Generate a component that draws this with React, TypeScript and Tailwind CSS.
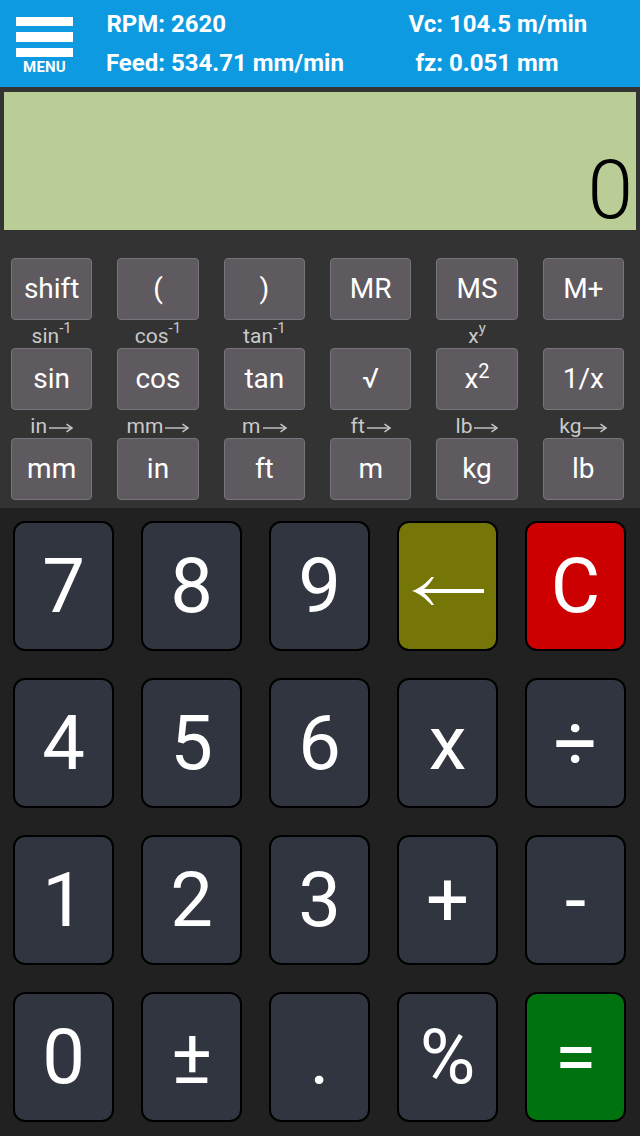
import React from "react";

const font = { fontFamily: "Roboto, 'Liberation Sans', sans-serif" };

function SmallArrow() {
  return (
    <svg width="24" height="10" viewBox="0 0 24 10" className="ml-[2px] mt-[3px]">
      <path d="M0 5 L22.5 5" stroke="#c9c9c9" strokeWidth="1.4" fill="none" />
      <path d="M17.5 1.2 L23 5 L17.5 8.8" stroke="#c9c9c9" strokeWidth="1.4" fill="none" />
    </svg>
  );
}

const sup = "text-[15px] top-[-0.55em]";

const row1: React.ReactNode[] = ["shift", "(", ")", "MR", "MS", "M+"];
const sub1: React.ReactNode[] = [
  <>sin<sup className={sup}>-1</sup></>,
  <>cos<sup className={sup}>-1</sup></>,
  <>tan<sup className={sup}>-1</sup></>,
  "",
  <>x<sup className={sup}>y</sup></>,
  "",
];
const row2: React.ReactNode[] = [
  "sin",
  "cos",
  "tan",
  "√",
  <>x<sup className="text-[20px] top-[-0.5em]">2</sup></>,
  "1/x",
];
const sub2: React.ReactNode[] = ["in", "mm", "m", "ft", "lb", "kg"].map((t) => (
  <span className="flex items-center">
    {t}
    <SmallArrow />
  </span>
));
const row3: React.ReactNode[] = ["mm", "in", "ft", "m", "kg", "lb"];

function TopRow({ items }: { items: React.ReactNode[] }) {
  return (
    <div className="grid grid-cols-6 gap-x-[25px] pl-[11px] pr-[16px]">
      {items.map((it, i) => (
        <div
          key={i}
          className="h-[62px] rounded-[4px] bg-[#5f5a60] border border-[#78747b] flex items-center justify-center text-white text-[28px] leading-none"
        >
          <span>{it}</span>
        </div>
      ))}
    </div>
  );
}

function SubRow({ items }: { items: React.ReactNode[] }) {
  return (
    <div className="grid grid-cols-6 gap-x-[25px] pl-[11px] pr-[16px] h-[28px]">
      {items.map((it, i) => (
        <div
          key={i}
          className="flex items-center justify-center text-[#c9c9c9] text-[21px] leading-none pt-[4px]"
        >
          <span className="flex items-center">{it}</span>
        </div>
      ))}
    </div>
  );
}

function Arrow() {
  return (
    <svg width="72" height="28" viewBox="0 0 72 28" className="mt-[9px]">
      <path
        d="M0 14 C8 11.5 14 6 19.5 0 L22 0 C19 5 16 9 12 12 L72 12 L72 16 L12 16 C16 19 19 23 22 28 L19.5 28 C14 22 8 16.5 0 14 Z"
        fill="#ffffff"
      />
    </svg>
  );
}

type Key = { label: React.ReactNode; bg?: string };

const keys: Key[] = [
  { label: "7" },
  { label: "8" },
  { label: "9" },
  { label: <Arrow />, bg: "olive" },
  { label: "C", bg: "red" },
  { label: "4" },
  { label: "5" },
  { label: "6" },
  { label: "x" },
  { label: "÷" },
  { label: "1" },
  { label: "2" },
  { label: "3" },
  { label: "+" },
  { label: "-" },
  { label: "0" },
  { label: "±" },
  { label: "." },
  { label: "%" },
  { label: "=", bg: "green" },
];

export default function App() {
  return (
    <div className="w-[640px] h-[1136px] flex flex-col bg-[#212121] overflow-hidden" style={font}>
      {/* Header */}
      <div className="h-[87px] bg-[#0e9ae0] flex items-start shrink-0">
        <div className="w-[104px] pl-[16px] pt-[17px] flex flex-col items-start">
          <div className="w-[57px] flex flex-col">
            <div className="h-[9px] bg-white" />
            <div className="h-[10px] bg-white mt-[6px]" />
            <div className="h-[9px] bg-white mt-[6px]" />
            <div className="text-white font-bold text-[15px] leading-none text-center mt-[3px] tracking-[0.2px]">
              MENU
            </div>
          </div>
        </div>
        <div className="grid grid-cols-[61px_240px_38px_auto] grid-rows-[39px_39px] pt-[4px] text-white font-bold text-[24px] leading-none">
          <div className="flex items-center justify-end">RPM:</div>
          <div className="pl-[6px] flex items-center">2620</div>
          <div className="flex items-center justify-end">Vc:</div>
          <div className="pl-[6px] flex items-center">104.5 m/min</div>
          <div className="flex items-center justify-end">Feed:</div>
          <div className="pl-[6px] flex items-center">534.71 mm/min</div>
          <div className="flex items-center justify-end">fz:</div>
          <div className="pl-[6px] flex items-center">0.051 mm</div>
        </div>
      </div>

      {/* Upper panel */}
      <div className="bg-[#333333] shrink-0 pt-[5px] pb-[8px]">
        <div className="mx-[4px] h-[138px] bg-[#bbcd97] flex items-end justify-end pr-[3px]">
          <span className="text-black text-[82px] leading-none font-light mb-[-1px]">0</span>
        </div>
        <div className="h-[28px]" />
        <TopRow items={row1} />
        <SubRow items={sub1} />
        <TopRow items={row2} />
        <SubRow items={sub2} />
        <TopRow items={row3} />
      </div>

      {/* Keypad */}
      <div className="flex-1 grid grid-cols-5 gap-x-[27px] gap-y-[27px] pl-[13px] pr-[14px] pt-[13px] content-start">
        {keys.map((k, i) => {
          const bg =
            k.bg === "olive"
              ? "bg-[#767508]"
              : k.bg === "red"
              ? "bg-[#cc0000]"
              : k.bg === "green"
              ? "bg-[#007210]"
              : "bg-[#313540]";
          return (
            <div
              key={i}
              className={`h-[130px] rounded-[12px] border-2 border-black flex items-center justify-center text-white text-[76px] leading-none ${bg}`}
            >
              {k.label}
            </div>
          );
        })}
      </div>
    </div>
  );
}
